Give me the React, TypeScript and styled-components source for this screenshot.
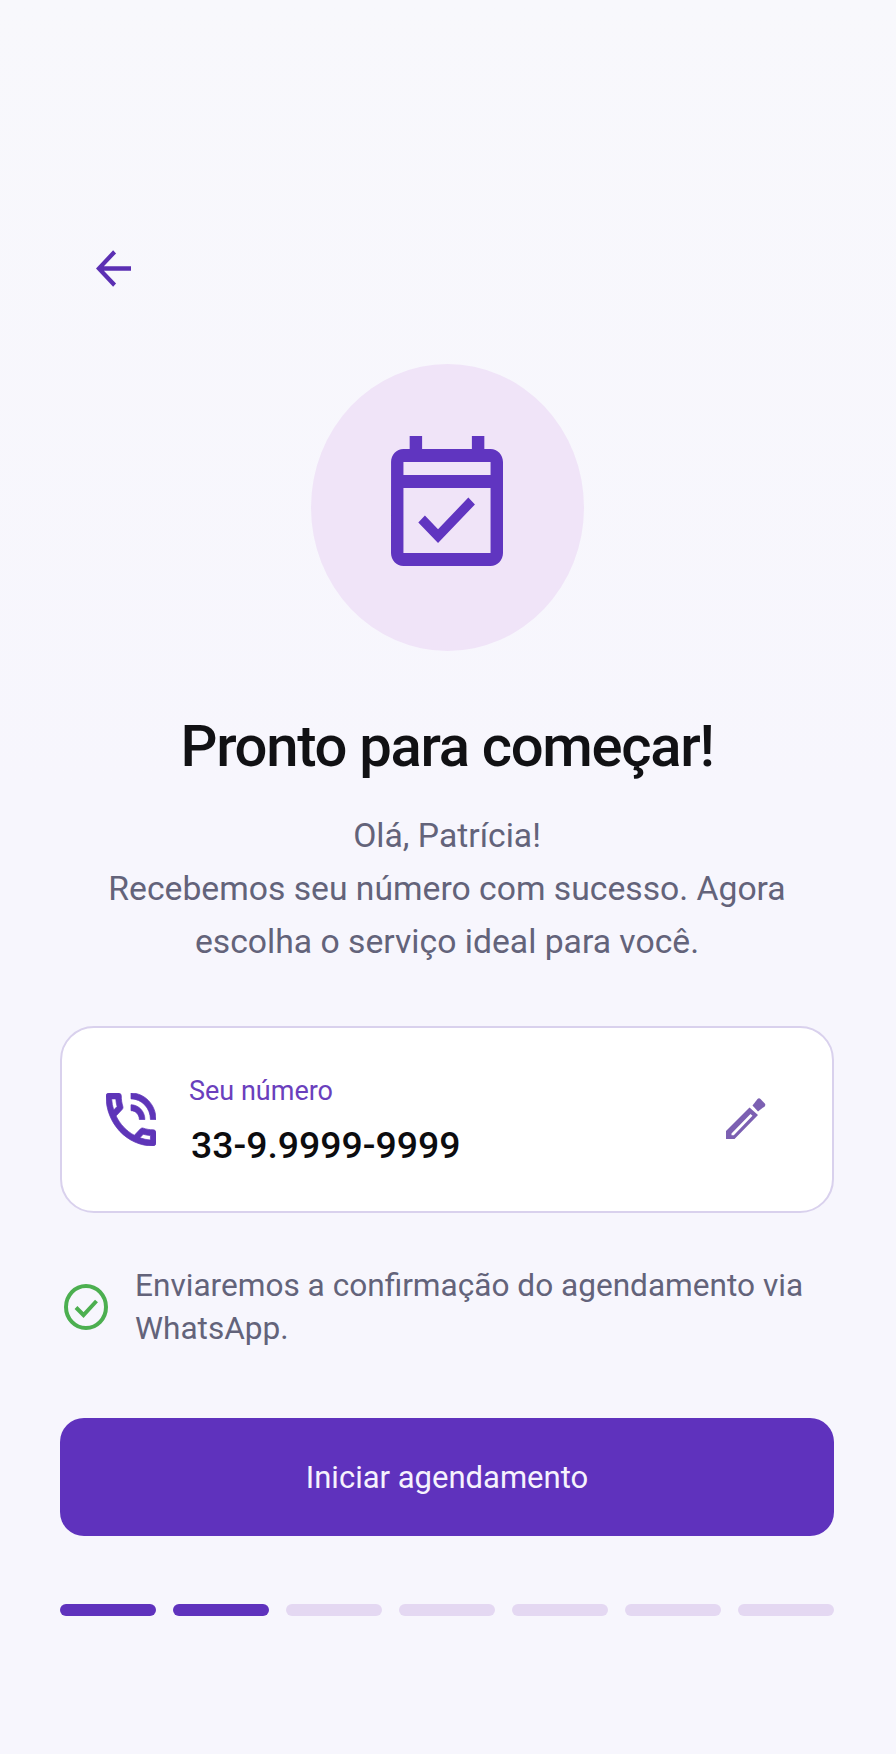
import React from "react";
import styled, { createGlobalStyle } from "styled-components";

const GlobalStyle = createGlobalStyle`
  html, body {
    margin: 0;
    padding: 0;
    background: #f7f6fd;
  }
`;

const STEPS = [true, true, false, false, false, false, false];

function App() {
  return (
    <>
      <GlobalStyle />
      <Screen>
        <BackButton aria-label="Voltar">
          <svg width="35" height="37" viewBox="4 4 16 16" preserveAspectRatio="none">
            <path
              d="M20 12H6M12.5 4.8 5.3 12l7.2 7.2"
              fill="none"
              stroke="currentColor"
              strokeWidth="1.9"
            />
          </svg>
        </BackButton>

        <Hero>
          <svg width="112" height="130" viewBox="3 2 18 20" preserveAspectRatio="none">
            <path
              fill="currentColor"
              d="M19 4h-1V2h-2v2H8V2H6v2H5c-1.11 0-1.99.9-1.99 2L3 20c0 1.1.89 2 2 2h14c1.1 0 2-.9 2-2V6c0-1.1-.9-2-2-2zm0 16H5V10h14v10zM5 8V6h14v2H5zm5.56 10.46l5.93-5.93-1.06-1.06-4.87 4.87-2.11-2.11-1.06 1.06 3.17 3.17z"
            />
          </svg>
        </Hero>

        <Title>Pronto para começar!</Title>
        <Intro>
          Olá, Patrícia!
          <br />
          Recebemos seu número com sucesso. Agora
          <br />
          escolha o serviço ideal para você.
        </Intro>

        <PhoneCard>
          <PhoneIcon>
            <svg width="50" height="53" viewBox="3 3 18 18" preserveAspectRatio="none">
              <path
                fill="currentColor"
                stroke="currentColor"
                strokeWidth="0.25"
                strokeLinejoin="round"
                d="M15 12h2c0-2.76-2.24-5-5-5v2c1.66 0 3 1.34 3 3zm4 0h2c0-4.97-4.03-9-9-9v2c3.87 0 7 3.13 7 7zm1 3.5c-1.25 0-2.45-.2-3.57-.57-.1-.03-.21-.05-.31-.05-.26 0-.51.1-.71.29l-2.2 2.2c-2.83-1.44-5.15-3.75-6.59-6.59l2.2-2.21c.28-.26.36-.65.25-1C8.7 6.45 8.5 5.25 8.5 4c0-.55-.45-1-1-1H4c-.55 0-1 .45-1 1 0 9.39 7.61 17 17 17 .55 0 1-.45 1-1v-3.5c0-.55-.45-1-1-1zM5.03 5h1.5c.07.88.22 1.75.45 2.58l-1.2 1.21c-.4-1.21-.66-2.47-.75-3.79zM19 18.97c-1.32-.09-2.6-.35-3.8-.76l1.2-1.2c.85.24 1.72.39 2.6.45v1.51z"
              />
            </svg>
          </PhoneIcon>
          <PhoneText>
            <PhoneLabel>Seu número</PhoneLabel>
            <PhoneValue>33-9.9999-9999</PhoneValue>
          </PhoneText>
          <EditButton aria-label="Editar">
            <svg width="41" height="44" viewBox="0 0 41 44">
              <path
                fill="currentColor"
                fillRule="evenodd"
                d="M1 34 24.5 10.5 33 18 9.5 42H1ZM6.5 36.5 25.5 17 27.5 18.8 8.8 38.2H6.5Z"
              />
              <path fill="currentColor" d="M27.5 8.5 32.5 2Q34 .6 35.5 2L39.8 6.5Q41 8 39.6 9.4L33 14.5Z" />
            </svg>
          </EditButton>
        </PhoneCard>

        <Notice>
          <CheckIcon width="44" height="46" viewBox="0 0 44 46">
            <ellipse cx="22" cy="23" rx="20" ry="21" fill="none" stroke="currentColor" strokeWidth="4" />
            <path d="M12 23.5 19.5 31 32.5 17" fill="none" stroke="currentColor" strokeWidth="4" />
          </CheckIcon>
          <NoticeText>Enviaremos a confirmação do agendamento via WhatsApp.</NoticeText>
        </Notice>

        <PrimaryButton>Iniciar agendamento</PrimaryButton>

        <Progress>
          {STEPS.map((done, i) => (
            <Step key={i} $done={done} />
          ))}
        </Progress>
      </Screen>
    </>
  );
}

export default App;

const Screen = styled.div`
  box-sizing: border-box;
  width: 896px;
  height: 1754px;
  padding: 250px 62px 0 60px;
  display: flex;
  flex-direction: column;
  font-family: Roboto, "Liberation Sans", sans-serif;
  background: linear-gradient(#f8f8fc, #f7f6fd 45%);
`;

const BackButton = styled.button`
  align-self: flex-start;
  display: flex;
  margin-left: 36px;
  padding: 0;
  border: none;
  background: none;
  color: #5b2fb3;
`;

const Hero = styled.div`
  box-sizing: border-box;
  align-self: center;
  width: 273px;
  height: 287px;
  margin-top: 77px;
  padding-bottom: 14px;
  display: flex;
  align-items: center;
  justify-content: center;
  border-radius: 50%;
  background: #f0e4f8;
  color: #6035c0;
`;

const Title = styled.h1`
  margin: 65px 0 0;
  font-size: 58px;
  line-height: 60px;
  letter-spacing: -1.3px;
  font-weight: 500;
  text-align: center;
  color: #111114;
`;

const Intro = styled.p`
  margin: 33px 0 0;
  font-size: 33.7px;
  line-height: 53px;
  text-align: center;
  color: #63637a;
`;

const PhoneCard = styled.div`
  box-sizing: border-box;
  height: 187px;
  margin-top: 58px;
  padding: 0 66px 0 44px;
  display: flex;
  align-items: center;
  border: 2px solid #d9d1ed;
  border-radius: 34px;
  background: #fff;
`;

const PhoneIcon = styled.div`
  display: flex;
  margin-right: 35px;
  color: #5e35b8;
`;

const PhoneText = styled.div`
  flex: 1;
  display: flex;
  flex-direction: column;
  padding-top: 3px;
`;

const PhoneLabel = styled.span`
  margin-left: -2px;
  font-size: 27px;
  line-height: 32px;
  color: #6a3fbd;
`;

const PhoneValue = styled.span`
  margin-top: 15px;
  font-size: 37.4px;
  line-height: 46px;
  font-weight: 500;
  color: #0c0c0f;
`;

const EditButton = styled.button`
  display: flex;
  margin-top: -2px;
  padding: 0;
  border: none;
  background: none;
  color: #7c60b2;
`;

const Notice = styled.div`
  margin-top: 51px;
  display: flex;
  align-items: center;
  gap: 27px;
  padding-left: 4px;
  color: #4caf50;
`;

const CheckIcon = styled.svg`
  flex-shrink: 0;
`;

const NoticeText = styled.p`
  margin: 0;
  font-size: 31.6px;
  line-height: 43px;
  color: #63637a;
`;

const PrimaryButton = styled.button`
  height: 118px;
  margin-top: 68px;
  border: none;
  border-radius: 24px;
  background: #5f32bd;
  color: #f6f2fd;
  font-family: inherit;
  font-size: 31px;
`;

const Progress = styled.div`
  margin-top: 68px;
  display: grid;
  grid-template-columns: repeat(7, 1fr);
  gap: 17px;
`;

const Step = styled.div<{ $done: boolean }>`
  height: 12px;
  border-radius: 6px;
  background: ${(p) => (p.$done ? "#5f32bd" : "#e4d8f2")};
`;
